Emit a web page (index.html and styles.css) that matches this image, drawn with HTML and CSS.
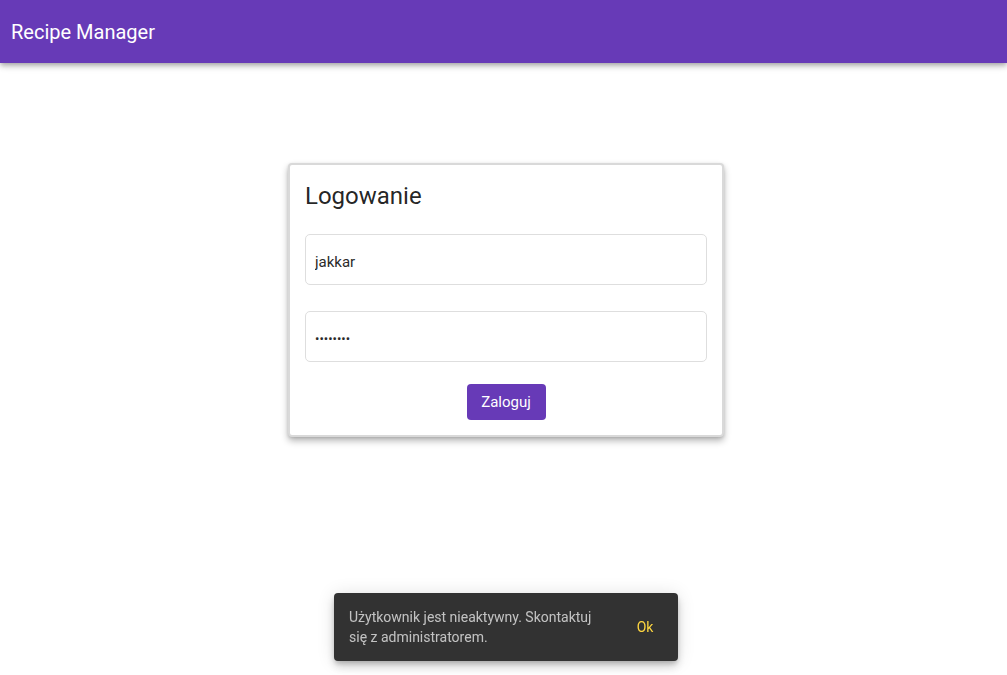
FILE: index.html
```html
<!DOCTYPE html>
<html lang="pl">
<head>
<meta charset="utf-8">
<title>Recipe Manager</title>
<link rel="stylesheet" href="styles.css">
</head>
<body>
<header class="toolbar">
  <span class="toolbar-title">Recipe Manager</span>
</header>
<main class="page">
  <form class="card" onsubmit="return false">
    <h1 class="card-title">Logowanie</h1>
    <input class="field" type="text" value="jakkar">
    <input class="field" type="password" value="password">
    <div class="actions">
      <button class="btn" type="submit">Zaloguj</button>
    </div>
  </form>
</main>
<div class="snackbar-wrap">
  <div class="snackbar">
    <div class="snackbar-msg">Użytkownik jest nieaktywny. Skontaktuj się z administratorem.</div>
    <button class="snackbar-action" type="button">Ok</button>
  </div>
</div>
</body>
</html>
```
FILE: styles.css
```css
* { box-sizing: border-box; }
html, body { margin: 0; padding: 0; }
body {
  font-family: Roboto, "Liberation Sans", sans-serif;
  background: #fff;
  color: rgba(0,0,0,0.87);
  height: 675px;
  overflow: hidden;
}
.toolbar {
  height: 63px;
  background: #673ab7;
  color: #fff;
  display: flex;
  align-items: center;
  padding: 0 11px;
  box-shadow: 0 2px 4px -1px rgba(0,0,0,.2), 0 4px 5px 0 rgba(0,0,0,.14), 0 1px 10px 0 rgba(0,0,0,.12);
  position: relative;
  z-index: 2;
}
.toolbar-title {
  font-size: 20px;
  font-weight: 400;
  line-height: 32px;
}
.page {
  display: flex;
  justify-content: center;
  padding: 100px 0 0 5px;
}
.card {
  width: 436px;
  background: #fff;
  border: 2px solid #d9d9d9;
  border-radius: 4px;
  padding: 15px;
  box-shadow: 0 4px 7px rgba(0,0,0,.28), 0 1px 3px rgba(0,0,0,.12);
  display: flex;
  flex-direction: column;
}
.card-title {
  margin: 0 0 22px 0;
  font-size: 24px;
  font-weight: 400;
  line-height: 32px;
  color: rgba(0,0,0,0.87);
}
.field {
  display: block;
  width: 100%;
  height: 51px;
  border: 1px solid #dedede;
  border-radius: 5px;
  padding: 4px 9px 0 9px;
  font-family: Roboto, "Liberation Sans", sans-serif;
  font-size: 15px;
  color: #2a2a2a;
  background: #fff;
  outline: none;
}
.field + .field { margin-top: 26px; }
.field[type="password"] { font-size: 13px; }
.actions {
  display: flex;
  justify-content: center;
  margin-top: 22px;
}
.btn {
  height: 36px;
  width: 79px;
  padding: 0;
  background: #673ab7;
  color: #fff;
  border: none;
  border-radius: 4px;
  font-family: Roboto, "Liberation Sans", sans-serif;
  font-size: 15px;
  font-weight: 400;
  cursor: pointer;
}
.snackbar-wrap {
  position: fixed;
  left: 5px;
  right: 0;
  bottom: 14px;
  display: flex;
  justify-content: center;
}
.snackbar {
  width: 344px;
  min-height: 68px;
  background: #323232;
  border-radius: 4px;
  display: flex;
  align-items: center;
  justify-content: space-between;
  padding: 14px 8px 14px 15px;
  box-shadow: 0 3px 5px -1px rgba(0,0,0,.2), 0 6px 10px 0 rgba(0,0,0,.14), 0 1px 18px 0 rgba(0,0,0,.12);
}
.snackbar-msg {
  width: 262px;
  font-size: 14px;
  line-height: 20px;
  color: rgba(255,255,255,0.7);
}
.snackbar-action {
  width: 50px;
  height: 36px;
  background: transparent;
  border: none;
  color: #ffd740;
  font-family: Roboto, "Liberation Sans", sans-serif;
  font-size: 14px;
  font-weight: 400;
  padding: 0;
}
```
